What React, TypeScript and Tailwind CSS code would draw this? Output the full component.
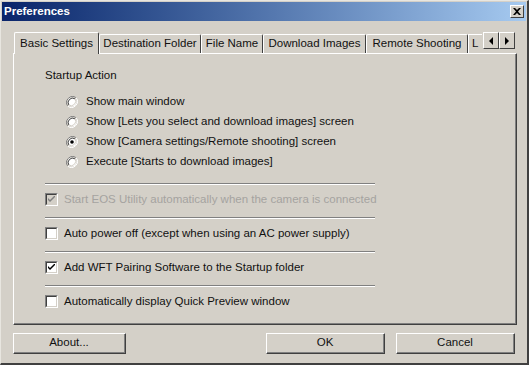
import React from "react";

const F = "font-['Liberation_Sans',Arial,sans-serif]";

function Radio({ checked }: { checked?: boolean }) {
  return (
    <svg width="12" height="12" viewBox="0 0 12 12" className="shrink-0">
      <path d="M10.2 1.8 A6 6 0 0 0 1.8 10.2" fill="none" stroke="#808080" strokeWidth="1" />
      <path d="M1.8 10.2 A6 6 0 0 0 10.2 1.8" fill="none" stroke="#ffffff" strokeWidth="1" />
      <circle cx="6" cy="6" r="4.5" fill="#ffffff" />
      <path d="M9 2.8 A4.5 4.5 0 0 0 2.8 9" fill="none" stroke="#404040" strokeWidth="1" />
      <path d="M2.8 9 A4.5 4.5 0 0 0 9 2.8" fill="none" stroke="#d4d0c8" strokeWidth="1" />
      {checked && <circle cx="6" cy="6" r="1.8" fill="#000" />}
    </svg>
  );
}

function Check({ checked, disabled }: { checked?: boolean; disabled?: boolean }) {
  return (
    <div className="w-[13px] h-[13px] shrink-0 border-t border-l border-t-[#808080] border-l-[#808080] border-r border-b border-r-white border-b-white">
      <div
        className={`w-full h-full border-t border-l border-t-[#404040] border-l-[#404040] border-r border-b border-r-[#d4d0c8] border-b-[#d4d0c8] flex items-center justify-center ${
          disabled ? "bg-[#d4d0c8]" : "bg-white"
        }`}
      >
        {checked && (
          <svg width="7" height="7" viewBox="0 0 7 7">
            <path
              d="M0 2 L0 4 L2 6 L7 1 L7 -1 L2 4 Z"
              fill={disabled ? "#808080" : "#000"}
            />
          </svg>
        )}
      </div>
    </div>
  );
}

function Sep() {
  return (
    <div className="w-[330px] h-[2px] flex flex-col">
      <div className="h-px bg-[#808080]" />
      <div className="h-px bg-white" />
    </div>
  );
}

function Button({ label, w }: { label: string; w: string }) {
  return (
    <div className={`${w} h-[21px] border-t border-l border-t-white border-l-white border-r border-b border-r-[#404040] border-b-[#404040]`}>
      <div className="w-full h-full border-r border-b border-r-[#808080] border-b-[#808080] flex items-center justify-center text-[11.5px] text-[#111]">
        {label}
      </div>
    </div>
  );
}

function Tab({ label, selected, w }: { label: string; selected?: boolean; w: string }) {
  return (
    <div
      className={`${w} shrink-0 flex items-center ${selected ? "justify-center h-[22px] relative z-10 bg-[#d4d0c8] -mb-px" : "justify-center h-[19px]"} border-t border-l border-t-white border-l-white border-r border-r-[#404040] rounded-t-[2px]`}
    >
      <span className="text-[11.5px] text-[#111] whitespace-nowrap">{label}</span>
    </div>
  );
}

function Arrow({ dir }: { dir: "l" | "r" }) {
  return (
    <div className="w-[16px] h-[17px] border-t border-l border-t-white border-l-white border-r border-b border-r-[#404040] border-b-[#404040] bg-[#d4d0c8] flex items-center justify-center">
      <svg width="5" height="8" viewBox="0 0 5 8">
        {dir === "l" ? <path d="M4 0 L4 8 L0 4 Z" fill="#000" /> : <path d="M0 0 L0 8 L4 4 Z" fill="#000" />}
      </svg>
    </div>
  );
}

export default function App() {
  return (
    <div className={`${F} w-[529px] h-[365px] bg-[#d4d0c8] border-t border-l border-t-[#e8e6e0] border-l-[#e8e6e0] border-r-2 border-b-2 border-r-[#404040] border-b-[#404040] flex flex-col overflow-hidden`}>
      {/* title bar */}
      <div className="h-[19px] mx-px mt-px bg-gradient-to-r from-[#0a246a] to-[#a6caf0] flex items-center justify-between pl-[2px] pr-[2px]">
        <span className="text-[11.5px] font-bold text-white">Preferences</span>
        <div className="w-[14px] h-[13px] bg-[#d4d0c8] border-t border-l border-t-white border-l-white border-r border-b border-r-[#404040] border-b-[#404040] flex items-center justify-center">
          <svg width="8" height="7" viewBox="0 0 8 7">
            <path d="M0 0 L2 0 L4 2 L6 0 L8 0 L5 3.5 L8 7 L6 7 L4 5 L2 7 L0 7 L3 3.5 Z" fill="#000" />
          </svg>
        </div>
      </div>

      {/* body */}
      <div className="flex flex-col pl-[12px] pr-[10px] pt-[10px]">
        {/* tabs */}
        <div className="flex items-end h-[22px] relative">
          <div className="ml-[1px] flex items-end">
            <Tab label="Basic Settings" selected w="w-[85px]" />
            <Tab label="Destination Folder" w="w-[102px]" />
            <Tab label="File Name" w="w-[62px]" />
            <Tab label="Download Images" w="w-[103px]" />
            <Tab label="Remote Shooting" w="w-[102px]" />
            <div className="w-[14px] h-[19px] border-t border-l border-t-white border-l-white flex items-center pl-[3px] overflow-hidden">
              <span className="text-[11.5px] text-[#111]">L</span>
            </div>
          </div>
          <div className="absolute right-[2px] top-[1px] flex">
            <Arrow dir="l" />
            <Arrow dir="r" />
          </div>
        </div>

        {/* panel */}
        <div className="h-[272px] border-t border-l border-t-white border-l-white border-r border-b border-r-[#404040] border-b-[#404040]">
          <div className="w-full h-full border-r border-b border-r-[#808080] border-b-[#808080] flex flex-col pl-[31px] pt-[15px]">
            <div className="h-[14px] flex items-center text-[11.5px] text-[#111]">Startup Action</div>
            <div className="mt-[9px] flex flex-col pl-[21px]">
              {[
                ["Show main window", false],
                ["Show [Lets you select and download images] screen", false],
                ["Show [Camera settings/Remote shooting] screen", true],
                ["Execute [Starts to download images]", false],
              ].map(([t, c]) => (
                <div key={t as string} className="h-[20px] flex items-center gap-[8px] text-[11.5px] text-[#111]">
                  <Radio checked={c as boolean} />
                  <span>{t as string}</span>
                </div>
              ))}
            </div>
            <div className="mt-[11px]">
              <Sep />
            </div>
            {[
              ["Start EOS Utility automatically when the camera is connected", true, true],
              ["Auto power off (except when using an AC power supply)", false, false],
              ["Add WFT Pairing Software to the Startup folder", true, false],
              ["Automatically display Quick Preview window", false, false],
            ].map(([t, c, d], i) => (
              <React.Fragment key={t as string}>
                <div className="h-[32px] pb-[3px] flex items-center gap-[6px] text-[11.5px]">
                  <Check checked={c as boolean} disabled={d as boolean} />
                  <span className={d ? "text-[#a5a3a0]" : "text-[#111]"}>{t as string}</span>
                </div>
                {i < 3 && <Sep />}
              </React.Fragment>
            ))}
          </div>
        </div>

        {/* buttons */}
        <div className="flex mt-[8px]">
          <Button label="About..." w="w-[113px]" />
          <div className="ml-auto flex gap-[11px] mr-[2px]">
            <Button label="OK" w="w-[119px]" />
            <Button label="Cancel" w="w-[119px]" />
          </div>
        </div>
      </div>
    </div>
  );
}
